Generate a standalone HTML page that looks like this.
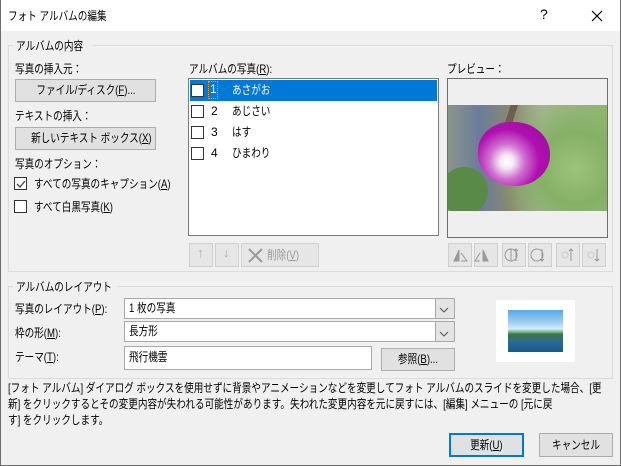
<!DOCTYPE html>
<html><head><meta charset="utf-8"><style>
*{box-sizing:border-box;margin:0;padding:0}
body{width:621px;height:466px;overflow:hidden;background:#f0f0f0;font-family:"Liberation Sans","Noto Sans CJK JP",sans-serif;font-size:12px;color:#000;position:relative}
.a{position:absolute;white-space:nowrap}
.t{transform:scaleX(.8);transform-origin:0 50%}
.win{position:absolute;left:0;top:0;width:621px;height:466px;border:1px solid #6d6d6d;border-top:none}
.title{position:absolute;left:0;top:0;width:621px;height:31px;background:#fff}
.grp{position:absolute;border:1px solid #dcdcdc}
.lbl{position:absolute;background:#f0f0f0;padding:0 3px;line-height:14px;white-space:nowrap;overflow:hidden}
.btn{position:absolute;background:#e1e1e1;border:1px solid #adadad;text-align:center;line-height:20px;white-space:nowrap}
.btn span{display:inline-block;transform:scaleX(.8);transform-origin:50% 50%}
.cb{position:absolute;width:13px;height:13px;border:1px solid #333;background:#fff}
.ib{position:absolute;width:24px;height:24px;border:1px solid #cfcfcf;background:#e6e6e6}
.combo{position:absolute;background:#fff;border:1px solid #a8a8a8;line-height:18px;padding-left:4px;white-space:nowrap}
.combo span{display:inline-block;transform:scaleX(.8);transform-origin:0 50%}
.dd{position:absolute;right:0;top:0;width:19px;height:100%;background:#e4e4e4;border-left:1px solid #a8a8a8}
u{text-decoration:underline}
</style></head><body>
<div class="title"></div>
<div class="a t" style="left:8px;top:7px">フォト アルバムの編集</div>
<div class="a" style="left:540px;top:6px;font-size:14px">?</div>
<svg class="a" style="left:591px;top:10px" width="12" height="12"><path d="M1 1L11 11M11 1L1 11" stroke="#000" stroke-width="1.2"/></svg>

<div class="grp" style="left:8px;top:45px;width:605px;height:227px"></div>
<div class="lbl" style="left:13px;top:39px;width:80px"><span class="t" style="display:inline-block">アルバムの内容</span></div>
<div class="a t" style="left:15px;top:60px">写真の挿入元：</div>
<div class="btn" style="left:15px;top:79px;width:141px;height:23px"><span>ファイル/ディスク(<u>F</u>)...</span></div>
<div class="a t" style="left:15px;top:107px">テキストの挿入：</div>
<div class="btn" style="left:15px;top:127px;width:141px;height:23px"><span>新しいテキスト ボックス(<u>X</u>)</span></div>
<div class="a t" style="left:15px;top:155px">写真のオプション：</div>
<div class="cb" style="left:14px;top:177px"></div>
<svg class="a" style="left:15px;top:178px" width="12" height="12"><path d="M2 6L5 9L10 3" stroke="#444" fill="none" stroke-width="1.3"/></svg>
<div class="a t" style="left:34px;top:175px">すべての写真のキャプション(<u>A</u>)</div>
<div class="cb" style="left:14px;top:200px"></div>
<div class="a t" style="left:34px;top:198px">すべて白黒写真(<u>K</u>)</div>

<div class="a t" style="left:189px;top:60px">アルバムの写真(<u>R</u>):</div>
<div class="a" style="left:188px;top:78px;width:251px;height:158px;background:#fff;border:1px solid #7a7a7a"></div>
<div class="a" style="left:190px;top:80px;width:247px;height:21px;background:#0078d7"></div>
<div class="cb" style="left:191px;top:84px"></div>
<div class="a" style="left:208px;top:81px;width:10px;height:18px;border:1px dotted #f0a040"></div>
<div class="a" style="left:210px;top:82px;color:#fff">1</div>
<div class="a t" style="left:232px;top:81px;color:#fff">あさがお</div>
<div class="cb" style="left:191px;top:105px"></div><div class="a" style="left:211px;top:104px">2</div><div class="a t" style="left:232px;top:102px">あじさい</div>
<div class="cb" style="left:191px;top:126px"></div><div class="a" style="left:211px;top:125px">3</div><div class="a t" style="left:232px;top:123px">はす</div>
<div class="cb" style="left:191px;top:147px"></div><div class="a" style="left:211px;top:146px">4</div><div class="a t" style="left:232px;top:144px">ひまわり</div>

<div class="ib" style="left:189px;top:243px"></div>
<div class="a" style="left:197px;top:245px;color:#aaa;font-size:13px">↑</div>
<div class="ib" style="left:215px;top:243px"></div>
<div class="a" style="left:223px;top:245px;color:#aaa;font-size:13px">↓</div>
<div class="ib" style="left:241px;top:243px;width:78px"></div>
<svg class="a" style="left:248px;top:248px" width="15" height="15"><path d="M1 1L14 14M14 1L1 14" stroke="#999" stroke-width="2"/></svg>
<div class="a t" style="left:267px;top:246px;color:#999">削除(<u>V</u>)</div>

<div class="a t" style="left:447px;top:60px">プレビュー：</div>
<div class="a" style="left:447px;top:78px;width:161px;height:160px;background:#efefef;border:1px solid #6d6d6d"></div>
<div class="a" style="left:448px;top:105px;width:159px;height:106px;overflow:hidden;background:radial-gradient(circle at 80% 60%,#9cc47a 0,#86b066 25%,transparent 55%),linear-gradient(90deg,#8a948c 0,#6b7c9a 20%,#8a8a6e 40%,#a9b89a 60%,#92b872 100%)">
<div class="a" style="left:58px;top:-5px;width:7px;height:40px;background:#6e5e50;transform:rotate(18deg)"></div>
<div class="a" style="left:-8px;top:62px;width:48px;height:48px;border-radius:50%;background:#5a8a48"></div>
<div class="a" style="left:30px;top:17px;width:72px;height:64px;border-radius:45% 50% 48% 50%;background:radial-gradient(circle at 40% 62%,#fff 0,#f4e6f4 12%,#d070d0 30%,#b010b0 55%,#9a0a9a 100%)"></div>
</div>

<div class="ib" style="left:448px;top:243px"></div><div class="ib" style="left:474px;top:243px"></div>
<div class="ib" style="left:502px;top:243px"></div><div class="ib" style="left:528px;top:243px"></div>
<div class="ib" style="left:556px;top:243px"></div><div class="ib" style="left:582px;top:243px"></div>
<svg class="a" style="left:448px;top:243px" width="160" height="24" fill="none" stroke="#999">
<path d="M6 18L11 7V18Z" fill="#999"/><path d="M13 18H19L13 10"/>
<path d="M40 18L35 7V18Z" fill="#999"/><path d="M32 18H27L32 10"/>
<circle cx="63" cy="12" r="6"/><path d="M63 6V18"/><path d="M68 18V6M66 8L68 6L70 8"/>
<circle cx="89" cy="12" r="6"/><path d="M94 6V18M92 16L94 18L96 16"/>
<circle cx="117" cy="12" r="3" stroke="#ccc"/><path d="M123 18V6M121 8L123 6L125 8"/>
<circle cx="143" cy="12" r="3" stroke="#ccc"/><path d="M149 6V18M147 16L149 18L151 16"/>
</svg>

<div class="grp" style="left:8px;top:286px;width:605px;height:93px"></div>
<div class="lbl" style="left:13px;top:280px;width:104px"><span class="t" style="display:inline-block">アルバムのレイアウト</span></div>
<div class="a t" style="left:15px;top:300px">写真のレイアウト(<u>P</u>):</div>
<div class="combo" style="left:124px;top:298px;width:331px;height:21px"><span>1 枚の写真</span><div class="dd"></div></div>
<div class="a t" style="left:15px;top:324px">枠の形(<u>M</u>):</div>
<div class="combo" style="left:124px;top:321px;width:331px;height:21px"><span>長方形</span><div class="dd"></div></div>
<svg class="a" style="left:439px;top:305px" width="10" height="40" fill="none" stroke="#555"><path d="M1 3L5 7L9 3M1 27L5 31L9 27"/></svg>
<div class="a t" style="left:15px;top:348px">テーマ(<u>T</u>):</div>
<div class="combo" style="left:124px;top:346px;width:248px;height:24px;line-height:20px"><span>飛行機雲</span></div>
<div class="btn" style="left:381px;top:348px;width:74px;height:23px"><span>参照(<u>B</u>)...</span></div>
<div class="a" style="left:496px;top:300px;width:79px;height:62px;background:#fff"></div>
<div class="a" style="left:508px;top:310px;width:55px;height:42px;background:linear-gradient(180deg,#5aa6e6 0,#9fd0f0 30%,#d8ecf8 45%,#2e7e3e 58%,#3a6e5e 65%,#2a6a9a 75%,#1a5a8a 100%)"></div>

<div class="a t" style="left:8px;top:380px;line-height:16px">[フォト アルバム] ダイアログ ボックスを使用せずに背景やアニメーションなどを変更してフォト アルバムのスライドを変更した場合、[更<br>新] をクリックするとその変更内容が失われる可能性があります。失われた変更内容を元に戻すには、[編集] メニューの [元に戻<br>す] をクリックします。</div>
<div class="btn" style="left:449px;top:433px;width:75px;height:24px;border:2px solid #0078d7;line-height:20px"><span>更新(<u>U</u>)</span></div>
<div class="btn" style="left:539px;top:433px;width:74px;height:24px;line-height:22px"><span>キャンセル</span></div>
<div class="win"></div>
</body></html>
